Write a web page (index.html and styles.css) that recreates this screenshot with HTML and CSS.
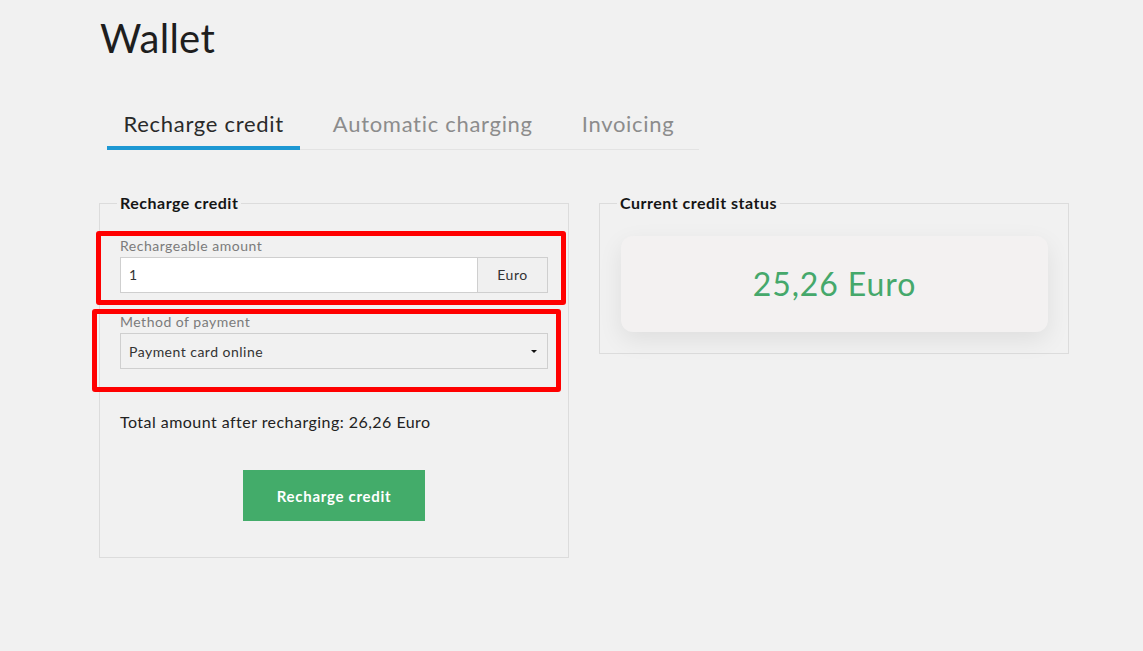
FILE: index.html
```html
<!DOCTYPE html>
<html lang="en">
<head>
<meta charset="utf-8">
<title>Wallet</title>
<link rel="stylesheet" href="styles.css">
</head>
<body>
<div class="page">
  <h1 class="title">Wallet</h1>
  <nav class="tabs">
    <a class="tab active">Recharge credit</a>
    <a class="tab">Automatic charging</a>
    <a class="tab">Invoicing</a>
  </nav>
  <div class="columns">
    <fieldset class="panel">
      <legend>Recharge credit</legend>
      <div class="group">
        <label class="label">Rechargeable amount</label>
        <div class="input-group">
          <div class="input">1</div>
          <div class="addon">Euro</div>
        </div>
      </div>
      <div class="group group-2">
        <label class="label">Method of payment</label>
        <div class="select">
          <span>Payment card online</span>
          <span class="caret"></span>
        </div>
      </div>
      <p class="total">Total amount after recharging: 26,26 Euro</p>
      <div class="actions">
        <button class="btn">Recharge credit</button>
      </div>
    </fieldset>
    <fieldset class="panel panel-right">
      <legend>Current credit status</legend>
      <div class="card">25,26 Euro</div>
    </fieldset>
  </div>
  <div class="mark mark-1"></div>
  <div class="mark mark-2"></div>
</div>
</body>
</html>
```
FILE: styles.css
```css
* { box-sizing: border-box; }
html, body { margin: 0; padding: 0; }
body {
  background: #f1f1f1;
  font-family: Lato, "Open Sans", "DejaVu Sans", sans-serif;
  color: #222;
  letter-spacing: 0.03em;
  width: 1143px;
  height: 651px;
  overflow: hidden;
}
.page {
  position: relative;
  padding: 14px 0 0 99px;
}
.title {
  margin: 0 0 0 1px;
  font-size: 40px;
  line-height: 48px;
  font-weight: 400;
  color: #1e1e1e;
  letter-spacing: 0.3px;
}
.tabs {
  display: flex;
  gap: 16px;
  width: 592px;
  margin: 49px 0 0 8px;
  border-bottom: 1px solid #e3e3e3;
}
.tab {
  font-size: 22px;
  line-height: 26px;
  letter-spacing: 0.7px;
  padding: 0 16.5px 9px;
  border-bottom: 4px solid transparent;
  margin-bottom: -1px;
  color: #8c8c8c;
}
.tab.active {
  color: #2a2a2a;
  border-bottom-color: #1e98d3;
}
.columns {
  display: grid;
  grid-template-columns: 470px 470px;
  gap: 30px;
  margin-top: 43px;
}
.panel {
  margin: 0;
  border: 1px solid #dcdcdc;
  padding: 23px 20px 36px;
  min-width: 0;
}
.panel-right {
  align-self: start;
  padding-bottom: 21px;
}
.panel legend {
  font-size: 16px;
  line-height: 20px;
  font-weight: 700;
  letter-spacing: 0.5px;
  color: #151515;
  padding: 0 3px;
  margin-left: -3px;
}
.label {
  display: block;
  font-size: 14px;
  line-height: 20px;
  letter-spacing: 0.5px;
  color: #7b7b7b;
  margin-bottom: 1px;
}
.group-2 { margin-top: 19px; }
.input-group {
  display: flex;
  height: 36px;
}
.input {
  flex: 1;
  background: #fff;
  border: 1px solid #cfcfcf;
  border-right: none;
  font-size: 14px;
  line-height: 34px;
  padding: 0 8px;
  color: #333;
}
.addon {
  width: 71px;
  border: 1px solid #cfcfcf;
  background: #f0f0f0;
  font-size: 14px;
  line-height: 34px;
  text-align: center;
  color: #333;
}
.select {
  height: 36px;
  border: 1px solid #cfcfcf;
  background: #f1f1f1;
  display: flex;
  align-items: center;
  justify-content: space-between;
  padding: 0 10px 0 8px;
  font-size: 14px;
  color: #333;
}
.caret {
  width: 0;
  height: 0;
  border-left: 3px solid transparent;
  border-right: 3px solid transparent;
  border-top: 3px solid #111;
}
.total {
  margin: 42px 0 0;
  font-size: 16px;
  line-height: 22px;
  letter-spacing: 0.46px;
  color: #222;
}
.actions {
  display: flex;
  justify-content: center;
  margin-top: 37px;
}
.btn {
  width: 182px;
  height: 51px;
  border: none;
  background: #43ac6a;
  color: #fff;
  font-family: inherit;
  font-size: 15px;
  font-weight: 700;
  letter-spacing: 0.7px;
  cursor: pointer;
}
.card {
  height: 96px;
  border-radius: 12px;
  background: #f3f1f1;
  box-shadow: 0 8px 24px rgba(0,0,0,0.08);
  display: flex;
  align-items: center;
  justify-content: center;
  font-size: 32px;
  letter-spacing: 0.9px;
  color: #45a86b;
  margin-left: 1px;
  padding-bottom: 2px;
}
.mark {
  position: absolute;
  border: 5px solid #f00;
  border-radius: 3px;
}
.mark-1 { left: 96px; top: 231px; width: 470px; height: 74px; }
.mark-2 { left: 92px; top: 309px; width: 469px; height: 83px; }
```
